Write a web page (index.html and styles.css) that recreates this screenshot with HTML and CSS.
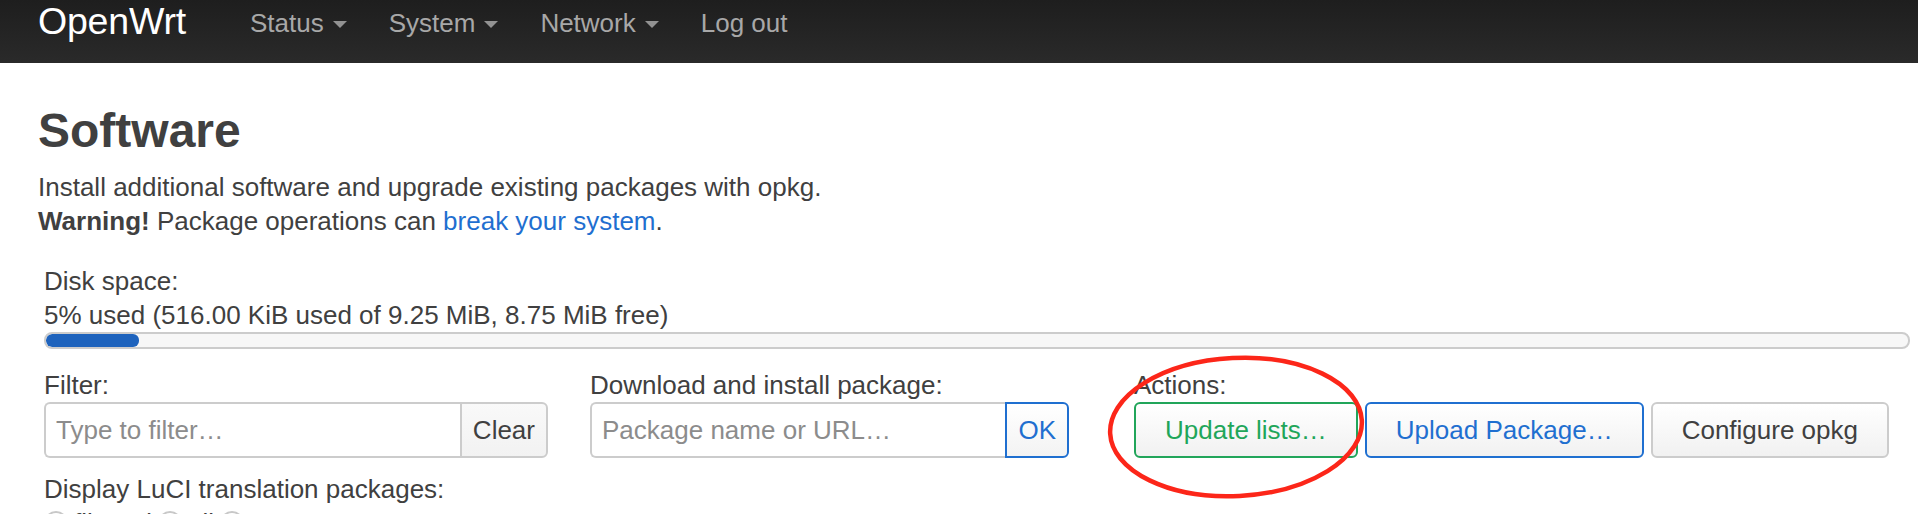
FILE: index.html
```html
<!DOCTYPE html>
<html lang="en">
<head>
<meta charset="utf-8">
<title>Software - OpenWrt</title>
<link rel="stylesheet" href="styles.css">
</head>
<body>
<header class="navbar">
  <a class="brand" href="#">OpenWrt</a>
  <ul class="nav">
    <li class="dropdown">Status<span class="caret"></span></li>
    <li class="dropdown">System<span class="caret"></span></li>
    <li class="dropdown">Network<span class="caret"></span></li>
    <li>Log out</li>
  </ul>
</header>

<main class="main">
  <h2 class="title">Software</h2>
  <p class="desc">Install additional software and upgrade existing packages with opkg.<br><strong>Warning!</strong> Package operations can <a href="#">break your system</a>.</p>

  <div class="panel">
    <div class="field">
      <div class="label">Disk space:</div>
      <div class="value">5% used (516.00 KiB used of 9.25 MiB, 8.75 MiB free)</div>
      <div class="progress"><div class="bar" style="width:5%"></div></div>
    </div>

    <div class="controls">
      <div class="ctl ctl-filter">
        <div class="label">Filter:</div>
        <div class="group">
          <input class="input" type="text" placeholder="Type to filter…">
          <button class="addon">Clear</button>
        </div>
      </div>
      <div class="ctl ctl-download">
        <div class="label">Download and install package:</div>
        <div class="group">
          <input class="input" type="text" placeholder="Package name or URL…">
          <button class="addon addon-blue">OK</button>
        </div>
      </div>
      <div class="ctl ctl-actions">
        <div class="label">Actions:</div>
        <div class="actions">
          <button class="btn btn-green">Update lists…</button>
          <button class="btn btn-blue">Upload Package…</button>
          <button class="btn">Configure opkg</button>
        </div>
      </div>
    </div>

    <div class="ctl ctl-lang">
      <div class="label">Display LuCI translation packages:</div>
      <div class="radios">
        <label class="radio"><span class="circle"></span>filtered</label>
        <label class="radio"><span class="circle"></span>all</label>
        <label class="radio"><span class="circle"></span>none</label>
      </div>
    </div>
  </div>
</main>

<svg class="annot" width="1918" height="514" viewBox="0 0 1918 514">
  <ellipse cx="1236" cy="427" rx="126" ry="69" transform="rotate(-3 1236 427)" fill="none" stroke="#fc2619" stroke-width="4.5"/>
</svg>
</body>
</html>
```

FILE: styles.css
```css
* { box-sizing: border-box; }

html, body {
  margin: 0;
  padding: 0;
  background: #fff;
  overflow: hidden;
}

body {
  width: 1918px;
  height: 514px;
  position: relative;
  font-family: "Liberation Sans", Arial, Helvetica, sans-serif;
  font-size: 26px;
  line-height: 34px;
  color: #404040;
}

/* ---------- navbar ---------- */
.navbar {
  height: 63px;
  background: linear-gradient(#1e1e1e, #2a2a2a);
  display: flex;
  align-items: flex-start;
  padding-left: 38px;
}

.brand {
  font-size: 37.5px;
  line-height: 42px;
  color: #fff;
  text-decoration: none;
  letter-spacing: -0.2px;
}

.nav {
  list-style: none;
  margin: 6px 0 0 64px;
  padding: 0;
  display: flex;
}

.nav li {
  color: #a8a8a8;
  font-size: 26px;
  line-height: 34px;
  margin-right: 42px;
  display: flex;
  align-items: center;
}

.caret {
  display: inline-block;
  width: 0;
  height: 0;
  margin-left: 9px;
  margin-top: 2px;
  border-left: 7px solid transparent;
  border-right: 7px solid transparent;
  border-top: 7px solid #929292;
}

/* ---------- main ---------- */
.main {
  padding: 0 8px 0 38px;
}

.title {
  margin: 39px 0 0;
  font-size: 48px;
  line-height: 57px;
  font-weight: bold;
  color: #404040;
}

.desc {
  margin: 11px 0 0;
}

.desc strong { font-weight: bold; }

.desc a {
  color: #1f6fd0;
  text-decoration: none;
}

.panel {
  padding-left: 6px;
  margin-top: 26px;
}

.progress {
  height: 17px;
  border: 2px solid #cccccc;
  border-radius: 8px;
  background: #f7f7f7;
  overflow: hidden;
}

.progress .bar {
  height: 100%;
  background: #1e63bd;
  border-radius: 6px;
}

/* ---------- controls ---------- */
.controls {
  display: flex;
  margin-top: 19px;
}

.ctl-filter { width: 504px; margin-right: 42px; }
.ctl-download { width: 479px; margin-right: 65px; }

.group {
  display: flex;
  height: 56px;
}

.input {
  flex: 1;
  min-width: 0;
  height: 56px;
  border: 2px solid #cccccc;
  border-right: none;
  border-radius: 6px 0 0 6px;
  padding: 0 10px;
  font-family: inherit;
  font-size: 26px;
  color: #404040;
  background: #fff;
  outline: none;
}

.input::placeholder { color: #8c8c8c; }

.addon {
  height: 56px;
  border: 2px solid #cccccc;
  border-radius: 0 6px 6px 0;
  background: linear-gradient(#f9f9f9, #f2f2f2);
  font-family: inherit;
  font-size: 26px;
  color: #404040;
  padding: 0 11px;
}

.addon-blue {
  border-color: #1f6fd0;
  color: #1f6fd0;
  background: linear-gradient(#fff, #f3f3f3);
}

.actions {
  display: flex;
  gap: 7px;
}

.btn {
  height: 56px;
  padding: 0 29px;
  border: 2px solid #cccccc;
  border-radius: 6px;
  background: linear-gradient(#ffffff, #f1f1f1);
  font-family: inherit;
  font-size: 26px;
  color: #404040;
}

.btn-green { border-color: #21a55a; color: #1fa65a; }
.btn-blue { border-color: #1f6fd0; color: #1f6fd0; }

/* ---------- radios ---------- */
.ctl-lang { margin-top: 14px; }

.radios {
  display: flex;
  align-items: center;
  height: 34px;
}

.radio {
  display: flex;
  align-items: center;
  margin-right: 6px;
}

.circle {
  width: 24px;
  height: 24px;
  border: 2px solid #c8c8c8;
  border-radius: 50%;
  background: #fff;
  margin-right: 6px;
}

/* ---------- annotation overlay ---------- */
.annot {
  position: absolute;
  left: 0;
  top: 0;
  pointer-events: none;
}
```
